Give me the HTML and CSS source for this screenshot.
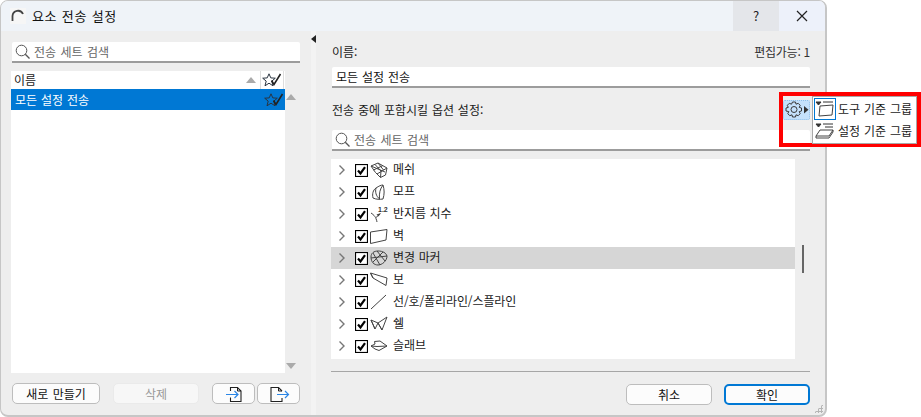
FILE: index.html
```html
<!DOCTYPE html>
<html lang="ko">
<head>
<meta charset="utf-8">
<title>요소 전송 설정</title>
<link rel="stylesheet" href="styles.css">
</head>
<body>
<svg class="defs" width="0" height="0" aria-hidden="true">
  <symbol id="mag" viewBox="0 0 16 16"><circle cx="6.5" cy="6.5" r="5.3" fill="none" stroke="#555"/><path d="M10.3 10.3 14.5 14.5" stroke="#555" stroke-width="1.3"/></symbol>
  <symbol id="star" viewBox="0 0 20 14"><path d="M7 .8 8.8 4.9 13.3 5.2 9.8 8.1 11 12.8 7 10.2 3 12.8 4.2 8.1 .7 5.2 5.2 4.9Z" fill="none" stroke="#2a3440"/><path d="M9.5 7.5 12 11.5 18.5 1" fill="none" stroke="#222" stroke-width="1.6"/></symbol>
  <symbol id="chev" viewBox="0 0 8 12"><path d="M1.5 1.5 6 6 1.5 10.5" fill="none" stroke="#777" stroke-width="1.4"/></symbol>
  <symbol id="chk" viewBox="0 0 13 13"><rect x=".5" y=".5" width="12" height="12" fill="#fff" stroke="#000" stroke-width="1.2"/><path d="M3 6.5 5.5 9.5 10 3.2" fill="none" stroke="#000" stroke-width="2.2"/></symbol>
</svg>
<div class="screen">
  <div class="window">
    <header class="titlebar">
      <svg class="app-icon" width="16" height="16" viewBox="0 0 16 16"><rect width="16" height="16" fill="#f6f6f6"/><path d="M2.5 13V8A5.5 5.5 0 0 1 13 6" fill="none" stroke="#444" stroke-width="1.8"/></svg>
      <span class="title">요소 전송 설정</span>
      <span class="grow"></span>
      <span class="tb-btn help">?</span>
      <span class="tb-btn close"><svg width="12" height="12" viewBox="0 0 12 12"><path d="M1 1 11 11M11 1 1 11" stroke="#222" stroke-width="1.2"/></svg></span>
    </header>
    <div class="content">
      <section class="left">
        <div class="field search"><svg class="ic-mag" width="16" height="16"><use href="#mag"/></svg><span>전송 세트 검색</span></div>
        <div class="list-wrap">
          <div class="set-list">
            <div class="set-head"><span class="grow">이름</span><span class="sort"></span><span class="star-cell"><svg width="20" height="14"><use href="#star"/></svg></span></div>
            <div class="set-row"><span class="grow">모든 설정 전송</span><svg width="20" height="14"><use href="#star"/></svg></div>
          </div>
          <div class="scroll"><span class="tri-up"></span><span class="tri-down"></span></div>
        </div>
        <div class="left-buttons">
          <button class="btn new">새로 만들기</button>
          <button class="btn del" disabled>삭제</button>
          <button class="btn io"><svg width="22" height="18" viewBox="0 0 22 18"><path d="M7.5 6V2.5H14.5L18 6V16.5H7.5V12.5" fill="none" stroke="#222" stroke-width="1.1"/><path d="M14.5 2.5V6H18" fill="none" stroke="#222"/><path d="M3 9.5H15M11.5 6 15 9.5 11.5 13" fill="none" stroke="#2b86e6" stroke-width="1.2"/></svg></button>
          <button class="btn io"><svg width="22" height="18" viewBox="0 0 22 18"><path d="M14 6 10.5 2.5H3V16.5H14V13" fill="none" stroke="#222" stroke-width="1.1"/><path d="M10.5 2.5V6H14" fill="none" stroke="#222"/><path d="M9 9.5H20.5M17 6 20.5 9.5 17 13" fill="none" stroke="#2b86e6" stroke-width="1.2"/></svg></button>
        </div>
      </section>
      <div class="splitter"><span class="tri-left"></span></div>
      <section class="right">
        <div class="line first"><span>이름:</span><span class="muted">편집가능: 1</span></div>
        <div class="field name"><span>모든 설정 전송</span></div>
        <div class="line second"><span>전송 중에 포함시킬 옵션 설정:</span></div>
        <div class="field search2"><svg class="ic-mag" width="16" height="16"><use href="#mag"/></svg><span>전송 세트 검색</span></div>
        <div class="tree-wrap">
          <div class="tree">
            <div class="row"><svg class="chev" width="8" height="12"><use href="#chev"/></svg><svg class="chk" width="13" height="13"><use href="#chk"/></svg>
              <svg class="ico" width="18" height="16" viewBox="0 0 18 16"><g fill="none" stroke="#444"><path d="M1 4 8 1 17 6 15.500 13 10.500 15.500Q5 11 1 4Z"/><path d="M5 2.500 11 9 10.500 15.500M8 1 13.500 8M3.500 8 13 3.500M7 12 17 6M1 4 15 10"/></g></svg><span>메쉬</span></div>
            <div class="row"><svg class="chev" width="8" height="12"><use href="#chev"/></svg><svg class="chk" width="13" height="13"><use href="#chk"/></svg>
              <svg class="ico" width="18" height="16" viewBox="0 0 18 16"><g fill="none" stroke="#444"><path d="M3 14C2 10 3 6 6 4 9 2 11 1 13 1 14.500 6 14.500 10 13 15 10 15.500 6 15.500 3 14Z"/><path d="M6 4C5 8 6 12 9.500 15M13 1C10 5 9 9 9.500 15"/></g></svg><span>모프</span></div>
            <div class="row"><svg class="chev" width="8" height="12"><use href="#chev"/></svg><svg class="chk" width="13" height="13"><use href="#chk"/></svg>
              <svg class="ico" width="18" height="16" viewBox="0 0 18 16"><path d="M1 7C4 9 6 11 7 16M6 11.500 10 8" fill="none" stroke="#444"/><path d="M11 7 6.500 8.500 8.500 10.500Z" fill="#444"/><text x="8" y="6" class="tiny">1.2</text></svg><span>반지름 치수</span></div>
            <div class="row"><svg class="chev" width="8" height="12"><use href="#chev"/></svg><svg class="chk" width="13" height="13"><use href="#chk"/></svg>
              <svg class="ico" width="18" height="16" viewBox="0 0 18 16"><path d="M.5 4 17 1.500 16 12 .5 15.500Z" fill="none" stroke="#444"/></svg><span>벽</span></div>
            <div class="row sel"><svg class="chev" width="8" height="12"><use href="#chev"/></svg><svg class="chk" width="13" height="13"><use href="#chk"/></svg>
              <svg class="ico" width="18" height="16" viewBox="0 0 18 16"><g fill="none" stroke="#444"><path d="M1 7C1 3 4 1 8 1 13 1 16 3 17 6 17 11 12 15 8 15 4 15 1 12 1 7Z"/><path d="M3 3 10 15M7 1 15 11M13 2 3 12M1 8 17 6"/></g></svg><span>변경 마커</span></div>
            <div class="row"><svg class="chev" width="8" height="12"><use href="#chev"/></svg><svg class="chk" width="13" height="13"><use href="#chk"/></svg>
              <svg class="ico" width="18" height="16" viewBox="0 0 18 16"><path d="M.500 1 17 6 16 13.500 3 6ZM.500 1 3 6" fill="none" stroke="#444"/></svg><span>보</span></div>
            <div class="row"><svg class="chev" width="8" height="12"><use href="#chev"/></svg><svg class="chk" width="13" height="13"><use href="#chk"/></svg>
              <svg class="ico" width="18" height="16" viewBox="0 0 18 16"><path d="M1 15 16 1" fill="none" stroke="#444"/></svg><span>선/호/폴리라인/스플라인</span></div>
            <div class="row"><svg class="chev" width="8" height="12"><use href="#chev"/></svg><svg class="chk" width="13" height="13"><use href="#chk"/></svg>
              <svg class="ico" width="18" height="16" viewBox="0 0 18 16"><path d="M1 4 8 7 17 1 12 14 8 7 5 13Z M1 4 5 13 M8 7 12 14" fill="none" stroke="#444"/></svg><span>쉘</span></div>
            <div class="row"><svg class="chev" width="8" height="12"><use href="#chev"/></svg><svg class="chk" width="13" height="13"><use href="#chk"/></svg>
              <svg class="ico" width="18" height="16" viewBox="0 0 18 16"><path d="M1 8 5 6 4.500 3.500 10 3 17 8 9 12.500 5 11Z M1 8 7 8.500 M7 8.500 17 8" fill="none" stroke="#444"/></svg><span>슬래브</span></div>
          </div>
          <div class="thumb-track"><span class="thumb"></span></div>
        </div>
        <div class="divider"></div>
        <div class="actions">
          <button class="btn action">취소</button>
          <button class="btn action primary">확인</button>
        </div>
      </section>
    </div>
    <div class="grip"></div>
  </div>
  <div class="highlight">
    <div class="gear-btn"><svg width="25" height="18" viewBox="0 0 25 18"><path d="M8.500 1h3l.5 2.200 2.200-.9 2 2-1 2.100 2.300.6v3l-2.300.6 1 2.100-2 2-2.200-.9-.5 2.200h-3l-.5-2.200-2.200.9-2-2 1-2.100L2 10V7l2.300-.6-1-2.100 2-2 2.200.9Z" fill="none" stroke="#3a3a3a"/><circle cx="10" cy="8.500" r="3" fill="none" stroke="#3a3a3a"/><path d="M20 5 24.500 8.800 20 12.500Z" fill="#333"/></svg></div>
    <div class="menu">
      <div class="menu-item"><span class="menu-ico current"><svg width="20" height="18" viewBox="0 0 20 18"><path d="M1 2H6L3.500 5ZM8 2H18" fill="#333" stroke="#333"/><path d="M5 6 18 5 17 15 4 16Z" fill="none" stroke="#444"/></svg></span><span>도구 기준 그룹</span></div>
      <div class="menu-item"><span class="menu-ico"><svg width="20" height="18" viewBox="0 0 20 18"><path d="M1 2H6L3.500 5ZM8 2H18M10 5H18" fill="#333" stroke="#333"/><path d="M5 8H18L14 14H1Z M1 14V16H14L18 10V8" fill="none" stroke="#444"/></svg></span><span>설정 기준 그룹</span></div>
    </div>
  </div>
</div>
</body>
</html>
```

FILE: styles.css
```css
* { box-sizing: border-box; }
html, body { margin: 0; height: 100%; background: #fff; }
body { font: 12px/16px "Noto Sans CJK KR", "Noto Sans", sans-serif; color: #1a1a1a; word-spacing: .5px; overflow: hidden; }
.defs { position: absolute; }
.screen { position: relative; width: 921px; height: 417px; }
.window { position: relative; width: 827px; height: 417px; background: #eeeeee; border: 1px solid #c6c6c6; border-width: 1px 2px 2px 1px; border-radius: 8px; overflow: hidden; display: flex; flex-direction: column; }
.titlebar { height: 30px; flex: none; display: flex; align-items: center; background: #eff3f8; padding-left: 9px; }
.app-icon { margin-right: 6px; }
.title { font-size: 13px; letter-spacing: .6px; color: #111; }
.grow { flex: 1; min-width: 0; }
.tb-btn { width: 46px; height: 30px; display: flex; align-items: center; justify-content: center; }
.help { background: #e4e6ea; font-size: 13px; color: #222; }
.close { background: #edf1fa; }
.content { flex: 1; display: flex; min-height: 0; }
.left { width: 310px; flex: none; padding: 11px 0 0 10px; display: flex; flex-direction: column; }
.field { background: #fff; border-bottom: 2px solid #9c9c9c; display: flex; align-items: center; color: #333; border-radius: 2px 2px 0 0; }
.search { width: 288px; margin-left: 1px; height: 21px; padding-left: 3px; color: #666; word-spacing: 1px; }
.ic-mag { margin-right: 3px; flex: none; }
.list-wrap { display: flex; height: 302px; margin-top: 8px; }
.set-list { width: 274px; background: #fff; display: flex; flex-direction: column; }
.set-head { display: flex; align-items: center; height: 18px; padding-left: 3px; }
.sort { border: 4px solid transparent; border-width: 0 5px 6px; border-bottom-color: #aaa; margin-right: 4px; }
.star-cell { width: 24px; height: 18px; border-left: 1px solid #ddd; border-right: 1px solid #ddd; display: flex; align-items: center; justify-content: center; margin-right: 1px; background: #fff; }
.set-row { display: flex; align-items: center; height: 21px; background: #0078d4; color: #fff; padding: 0 1px 0 4px; }
.scroll { flex: 1; display: flex; flex-direction: column; align-items: center; justify-content: space-between; padding: 23px 14px 4px 0; }
.tri-up { border: solid transparent; border-width: 0 5px 6px; border-bottom-color: #aaa; }
.tri-down { border: solid transparent; border-width: 6px 5px 0; border-top-color: #aaa; }
.left-buttons { display: flex; margin: 10px 0 0 1px; }
.btn { height: 21px; padding: 0; background: #fcfcfc; border: 1px solid #bdbdbd; border-radius: 5px; font: inherit; color: #111; word-spacing: 1px; display: flex; align-items: center; justify-content: center; }
.new { width: 88px; margin-right: 13px; }
.del { width: 86px; margin-right: 13px; background: #f7f7f7; border-color: #eaeaea; color: #999; }
.io { width: 43px; margin-right: 2px; }
.splitter { width: 20px; flex: none; position: relative; background: linear-gradient(to right, #f3f3f3 0 5px, #eeeeee 5px); }
.tri-left { position: absolute; left: 0; top: 4px; border: solid transparent; border-width: 4px 5px 4px 0; border-right-color: #222; }
.right { flex: 1; padding-right: 15px; display: flex; flex-direction: column; }
.line { display: flex; justify-content: space-between; padding-left: 1px; }
.muted { color: #333; word-spacing: 0; letter-spacing: -.25px; }
.first { margin-top: 13px; height: 16px; }
.name { height: 21px; margin: 7px 0 0 1px; padding-left: 4px; color: #111; }
.second { margin-top: 14px; height: 16px; }
.search2 { height: 21px; margin: 12px 0 0 1px; padding-left: 3px; color: #666; word-spacing: 1px; }
.tree-wrap { display: flex; margin-top: 8px; height: 200px; }
.tree { width: 464px; background: #fff; }
.row { height: 22px; display: flex; align-items: center; padding-left: 7px; }
.row > span { margin-left: 5px; position: relative; top: -1px; letter-spacing: -.1px; }
.sel { background: #d6d6d6; }
.chev { margin-right: 9px; flex: none; }
.chk { margin-right: 2px; flex: none; }
.ico { flex: none; }
.tiny { font: 700 7px "Liberation Sans", sans-serif; fill: #333; }
.thumb-track { flex: 1; position: relative; }
.thumb { position: absolute; left: 7px; top: 86px; width: 2px; height: 28px; background: #666; }
.divider { height: 1px; background: #a6a6a6; margin-top: 12px; }
.actions { display: flex; justify-content: flex-end; gap: 12px; margin-top: 12px; }
.action { width: 86px; }
.primary { border: 2px solid #0078d4; }
.grip { position: absolute; right: 2px; bottom: 2px; width: 9px; height: 9px; background: radial-gradient(circle, #b5b5b5 1px, transparent 1.2px) 0 0/3px 3px; clip-path: polygon(100% 0, 100% 100%, 0 100%); }
.highlight { position: absolute; left: 779px; top: 92px; width: 142px; height: 55px; border: 4px solid #ff0000; display: flex; }
.gear-btn { position: absolute; left: 0; top: 4px; width: 27px; height: 20px; background: #c4e1fb; border: 1px dotted #8fbfe8; display: flex; align-items: center; justify-content: center; border-radius: 2px; }
.menu { position: absolute; left: 29px; top: 0; width: 105px; height: 48px; background: #fff; border: 1px solid #a8a8a8; padding: 1px; }
.menu-item { display: flex; align-items: center; height: 22px; font-size: 12px; }
.menu-ico { width: 22px; height: 22px; display: flex; align-items: center; justify-content: center; margin-right: 2px; border: 1px solid transparent; }
.current { border-color: #0078d4; }
```
